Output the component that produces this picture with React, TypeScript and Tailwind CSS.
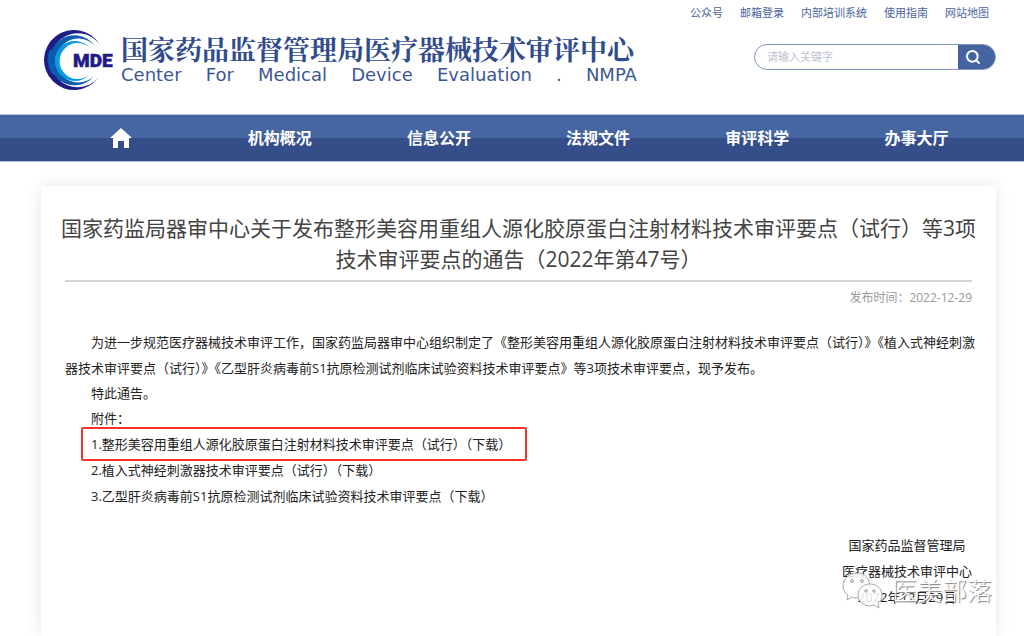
import { Search } from "lucide-react";

const TOP_LINKS = ["公众号", "邮箱登录", "内部培训系统", "使用指南", "网站地图"];

const NAV_ITEMS = ["机构概况", "信息公开", "法规文件", "审评科学", "办事大厅"];

const SLOGAN = ["Center", "For", "Medical", "Device", "Evaluation", ".", "NMPA"];

type Attachment = { title: string; marked?: boolean };

const ATTACHMENTS: Attachment[] = [
  { title: "1.整形美容用重组人源化胶原蛋白注射材料技术审评要点（试行）", marked: true },
  { title: "2.植入式神经刺激器技术审评要点（试行）" },
  { title: "3.乙型肝炎病毒前S1抗原检测试剂临床试验资料技术审评要点" },
];

// three nested crescents, dark to light, with the lettering across the opening
function Emblem() {
  return (
    <svg viewBox="0 0 72 62" className="h-[62px] w-[72px] shrink-0" aria-label="CMDE">
      <path d="M59 16A30 30 0 1 0 57 49A27 27 0 1 1 59 16Z" fill="#1f1c86" />
      <path d="M54 17A25 25 0 1 0 53 47A22 22 0 1 1 54 17Z" fill="#0a5cae" />
      <path d="M49 19A20 20 0 1 0 48 46A18 18 0 1 1 49 19Z" fill="#0b9ae0" />
      <path d="M9 20A25 25 0 0 0 12 46L16 41A20 20 0 0 1 15 24Z" fill="#0a5cae" />
      <text
        x="32"
        y="38"
        fill="#1f1c86"
        stroke="#1f1c86"
        strokeWidth="0.5"
        fontSize="19"
        fontWeight="900"
        fontFamily="Roboto, 'Liberation Sans', sans-serif"
      >
        MDE
      </text>
    </svg>
  );
}

function Header() {
  return (
    <header className="mr-7 ml-[41px] flex h-[114px] justify-between">
      <div className="flex items-start gap-2 pt-[29px]">
        <Emblem />
        <div className="w-[516px] pt-1">
          <p className="font-['Noto_Serif_CJK_SC','Noto_Sans_CJK_SC',serif] text-[27px] leading-8 font-bold whitespace-nowrap text-[#314c8c]">
            国家药品监督管理局医疗器械技术审评中心
          </p>
          <p className="flex justify-between font-['DejaVu_Sans',sans-serif] text-[18px] leading-5 text-[#3d5793]">
            {SLOGAN.map((word) => (
              <span key={word}>{word}</span>
            ))}
          </p>
        </div>
      </div>
      <div className="flex flex-col items-end gap-[22px] pt-1">
        <nav className="flex gap-[17px] pr-[7px] text-[11px] leading-[18px] text-[#4a649c]">
          {TOP_LINKS.map((label) => (
            <a key={label} href="#">
              {label}
            </a>
          ))}
        </nav>
        <form className="flex h-[26px] w-[242px] overflow-hidden rounded-full border border-[#7f95c2]">
          <input
            type="text"
            aria-label="请输入关键字"
            placeholder="请输入关键字"
            className="min-w-0 flex-1 pl-3 text-[11px] outline-none placeholder:text-[#bcc3d3]"
          />
          <button type="submit" aria-label="搜索" className="w-[37px] bg-[#4464a0] pl-[7px] text-white">
            <Search size={16} strokeWidth={3} />
          </button>
        </form>
      </div>
    </header>
  );
}

function MainNav() {
  return (
    <nav className="border-y border-[#b9c5de] bg-linear-to-b from-[#4566a1] from-51% to-[#354d88] to-51%">
      <div className="mr-7 ml-[41px] grid h-[46px] grid-cols-6 items-center text-center text-base font-bold text-white">
        <a href="#" aria-label="首页" className="flex justify-center">
          <svg viewBox="0 0 22 20" className="h-5 w-[22px]" fill="currentColor">
            <path d="M11 0 0 10h3v10h5v-7h6v7h5V10h3Z" />
          </svg>
        </a>
        {NAV_ITEMS.map((label) => (
          <a key={label} href="#">
            {label}
          </a>
        ))}
      </div>
    </nav>
  );
}

function Watermark() {
  return (
    <div className="absolute -right-5 bottom-px flex items-center gap-2 whitespace-nowrap">
      <svg viewBox="0 0 42 38" className="h-[38px] w-[42px]" fill="#fff" fillOpacity="0.85" stroke="#a8a8a8" strokeWidth="1">
        <path d="M15 2C7 2 1 8 1 15c0 4 2 7 5 9l-1 5 5-3c2 1 4 1 6 1l12-10C28 8 23 2 15 2Z" />
        <path d="M28 13c-7 0-12 5-12 11s5 11 12 11l4-1 5 3-1-5c3-2 4-5 4-8 0-6-5-11-12-11Z" />
        <g fill="#ddd">
          <circle cx="10" cy="10" r="1.5" />
          <circle cx="20" cy="10" r="1.5" />
          <circle cx="24" cy="20" r="1.3" />
          <circle cx="32" cy="20" r="1.3" />
        </g>
      </svg>
      <span className="text-[25px] leading-[38px] font-light text-white [text-shadow:1px_1px_1px_#777]">
        医美部落
      </span>
    </div>
  );
}

function Article() {
  return (
    <article className="mt-6 mr-7 ml-[41px] grow bg-white pb-6 shadow-[0_0_16px_rgba(0,0,0,0.1)]">
      <h1 className="pt-[27px] pb-[5px] text-center text-[21px] leading-[31px] font-normal whitespace-nowrap text-[#444]">
        国家药监局器审中心关于发布整形美容用重组人源化胶原蛋白注射材料技术审评要点（试行）等3项
        <br />
        技术审评要点的通告（2022年第47号）
      </h1>
      <div className="mx-6 border-t-2 border-[#d2d4d4] text-[13px] text-[#222]">
        <p className="pt-[7px] text-right text-xs leading-[18px] text-[#999]">发布时间：2022-12-29</p>
        <p className="-mr-1 pt-[22px] indent-[26px] leading-[26px]">
          为进一步规范医疗器械技术审评工作，国家药监局器审中心组织制定了《整形美容用重组人源化胶原蛋白注射材料技术审评要点（试行）》《植入式神经刺激器技术审评要点（试行）》《乙型肝炎病毒前S1抗原检测试剂临床试验资料技术审评要点》等3项技术审评要点，现予发布。
        </p>
        <div className="pl-[26px] leading-[25px]">
          <p>特此通告。</p>
          <p>附件：</p>
        </div>
        <ul className="pl-[26px] leading-[26px]">
          {ATTACHMENTS.map(({ title, marked }) => (
            <li key={title} className="relative w-fit">
              <a href="#">
                {title}（下载）
              </a>
              {marked && (
                <span className="absolute -inset-y-1 -right-4 -left-[10px] rounded-xs border-2 border-[#f8342c]" />
              )}
            </li>
          ))}
        </ul>
        <div className="relative mt-[23px] ml-auto w-[130px] text-center leading-[26px]">
          <p>国家药品监督管理局</p>
          <p>医疗器械技术审评中心</p>
          <p>2022年12月29日</p>
          <Watermark />
        </div>
      </div>
    </article>
  );
}

export default function App() {
  return (
    <div className="flex min-h-screen flex-col overflow-hidden bg-white font-['Open_Sans','Noto_Sans_CJK_SC',sans-serif]">
      <Header />
      <MainNav />
      <Article />
    </div>
  );
}
